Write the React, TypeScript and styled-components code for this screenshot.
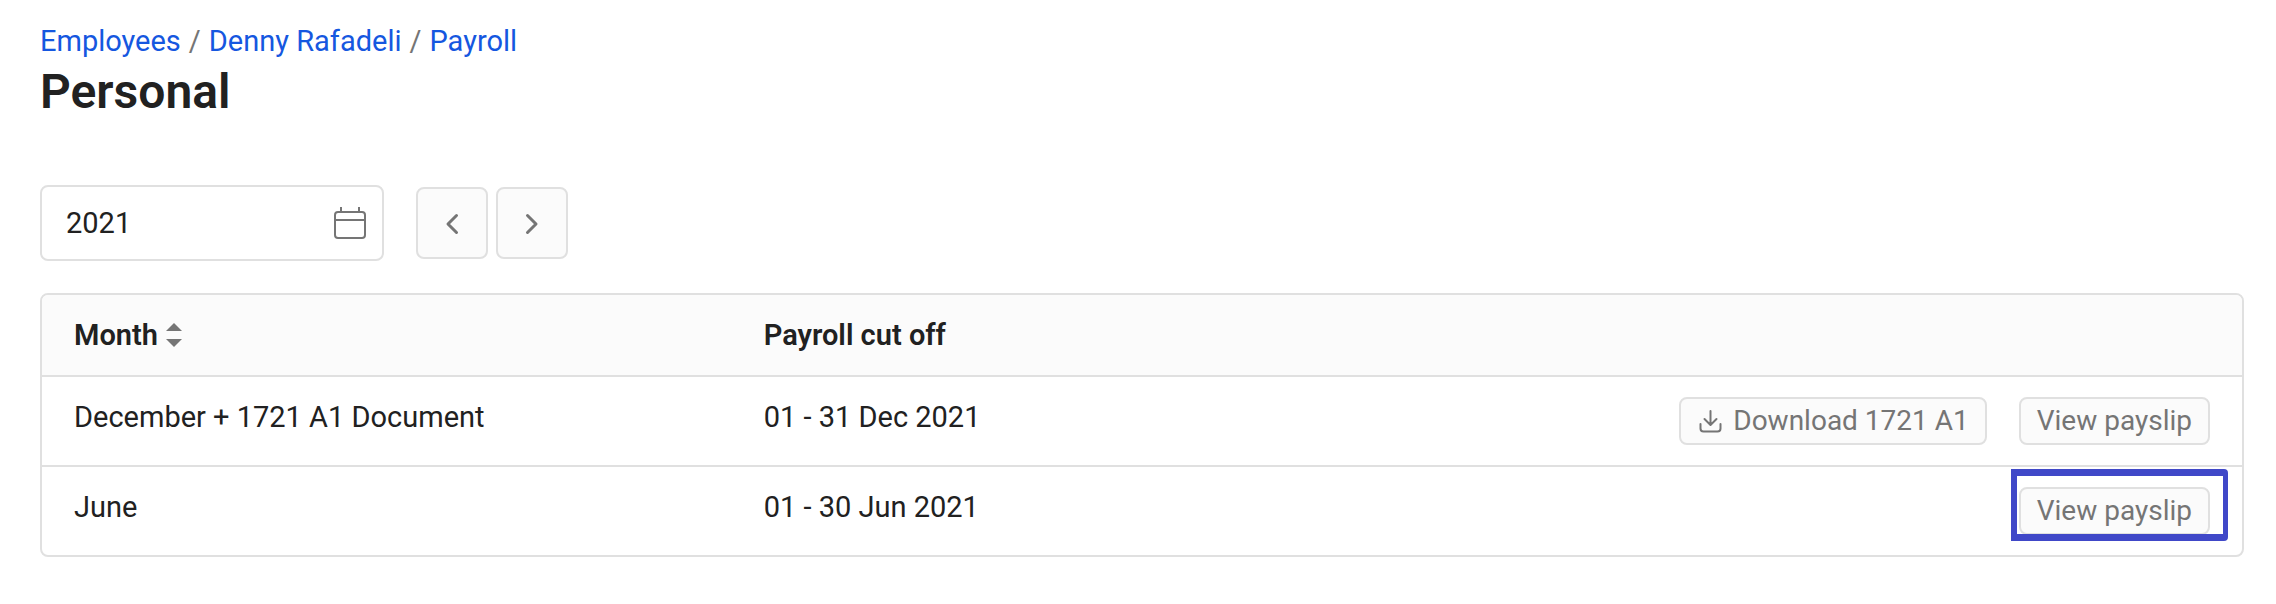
import React from 'react';
import styled, { createGlobalStyle } from 'styled-components';

const color = {
  text: '#212121',
  muted: '#757575',
  link: '#1557e0',
  line: '#e0e0e0',
  surface: '#fbfbfb',
  highlight: '#4048c8',
};

const GlobalStyle = createGlobalStyle`
  *, *::before, *::after { box-sizing: border-box; }
  body {
    margin: 0;
    background: #ffffff;
    color: ${color.text};
    font-family: Roboto, "Liberation Sans", sans-serif;
    font-size: 29px;
    line-height: 40px;
  }
  button, input { font: inherit; }
`;

const Page = styled.main`
  padding: 21px 32px 40px 40px;
`;

const Crumbs = styled.ol`
  display: flex;
  flex-wrap: wrap;
  margin: 0;
  padding: 0;
  list-style: none;
`;

const Crumb = styled.li`
  & + &::before {
    content: '/';
    padding: 0 8px;
    color: ${color.muted};
  }
`;

const CrumbLink = styled.a`
  color: ${color.link};
  text-decoration: none;
`;

const Title = styled.h1`
  margin: 0;
  font-size: 48px;
  line-height: 62px;
  font-weight: 600;
`;

const Toolbar = styled.div`
  display: flex;
  align-items: center;
  gap: 32px;
  margin-top: 62px;
`;

const YearField = styled.label`
  display: flex;
  align-items: center;
  width: 344px;
  height: 76px;
  padding: 0 16px 0 24px;
  border: 2px solid ${color.line};
  border-radius: 8px;
  background: #ffffff;
`;

const YearInput = styled.input`
  flex: 1;
  min-width: 0;
  padding: 0;
  border: 0;
  outline: 0;
  background: transparent;
  color: ${color.text};
`;

const Pager = styled.div`
  display: flex;
  gap: 8px;
`;

const PagerButton = styled.button`
  display: flex;
  align-items: center;
  justify-content: center;
  width: 72px;
  height: 72px;
  padding: 0;
  border: 2px solid ${color.line};
  border-radius: 8px;
  background: ${color.surface};
  color: ${color.muted};
`;

const TableCard = styled.section`
  margin-top: 32px;
  border: 2px solid ${color.line};
  border-radius: 8px;
  overflow: hidden;
`;

const Table = styled.table`
  width: 100%;
  border-collapse: separate;
  border-spacing: 0;
  table-layout: fixed;
`;

const HeadCell = styled.th<{ $width?: string }>`
  width: ${({ $width }) => $width ?? 'auto'};
  padding: 20px 32px;
  background: ${color.surface};
  font-weight: 600;
  text-align: left;
`;

const SortButton = styled.button`
  display: flex;
  align-items: center;
  gap: 8px;
  padding: 0;
  border: 0;
  background: none;
  color: inherit;
`;

const Cell = styled.td`
  height: 90px;
  padding: 20px 32px;
  border-top: 2px solid ${color.line};
  vertical-align: top;
`;

const Actions = styled.div`
  display: flex;
  justify-content: flex-end;
  gap: 32px;
`;

const ActionButton = styled.button`
  display: flex;
  align-items: center;
  gap: 10px;
  height: 48px;
  padding: 0 16px;
  border: 2px solid ${color.line};
  border-radius: 8px;
  background: ${color.surface};
  color: ${color.muted};
  font-size: 28px;
  white-space: nowrap;
`;

const Highlighted = styled.div`
  position: relative;

  &::after {
    content: '';
    position: absolute;
    inset: -18px -18px -6px -8px;
    border: solid ${color.highlight};
    border-width: 7px 5px 7px 6px;
    border-radius: 0 4px 4px 0;
    pointer-events: none;
  }
`;

const CalendarIcon = () => (
  <svg width="32" height="32" viewBox="0 0 32 32" fill="none" stroke={color.muted} strokeWidth="2" aria-hidden="true">
    <rect x="1" y="5" width="30" height="26" rx="3" />
    <path d="M1 13H31M7 0V4M25 0V4" />
  </svg>
);

const Chevron = ({ direction }: { direction: 'left' | 'right' }) => (
  <svg width="24" height="24" viewBox="0 0 24 24" fill="none" stroke="currentColor" strokeWidth="3" strokeLinecap="round" strokeLinejoin="round" aria-hidden="true">
    <path d={direction === 'left' ? 'M16.5 4.5L8 13L16.5 21.5' : 'M7.500 4.5L16 13L7.500 21.5'} />
  </svg>
);

const SortIcon = () => (
  <svg width="16" height="24" viewBox="0 0 16 24" fill={color.muted} aria-hidden="true">
    <path d="M8 0L16 8H0zM0 16H16L8 24z" />
  </svg>
);

const DownloadIcon = () => (
  <svg width="26" height="24" viewBox="0 0 26 24" fill="none" stroke="currentColor" strokeWidth="2" strokeLinecap="round" strokeLinejoin="round" aria-hidden="true">
    <path d="M13.500 2V15.500M7.500 10L13.500 16L19.500 10M3.500 15V19.500Q3.500 22.500 6.500 22.500H20.500Q23.500 22.500 23.500 19.500V15" />
  </svg>
);

const crumbs = ['Employees', 'Denny Rafadeli', 'Payroll'];

const payrolls = [
  { month: 'December + 1721 A1 Document', cutOff: '01 - 31 Dec 2021', taxForm: true, highlighted: false },
  { month: 'June', cutOff: '01 - 30 Jun 2021', taxForm: false, highlighted: true },
];

export default function App() {
  return (
    <>
      <GlobalStyle />
      <Page>
        <header>
          <nav aria-label="Breadcrumb">
            <Crumbs>
              {crumbs.map((name) => (
                <Crumb key={name}>
                  <CrumbLink href="#">{name}</CrumbLink>
                </Crumb>
              ))}
            </Crumbs>
          </nav>
          <Title>Personal</Title>
        </header>

        <Toolbar>
          <YearField>
            <YearInput type="text" aria-label="Year" defaultValue="2021" />
            <CalendarIcon />
          </YearField>
          <Pager>
            <PagerButton type="button" aria-label="Previous year">
              <Chevron direction="left" />
            </PagerButton>
            <PagerButton type="button" aria-label="Next year">
              <Chevron direction="right" />
            </PagerButton>
          </Pager>
        </Toolbar>

        <TableCard>
          <Table>
            <thead>
              <tr>
                <HeadCell scope="col" $width="31.35%">
                  <SortButton type="button">
                    Month
                    <SortIcon />
                  </SortButton>
                </HeadCell>
                <HeadCell scope="col" $width="31.35%">Payroll cut off</HeadCell>
                <HeadCell scope="col" aria-label="Actions" />
              </tr>
            </thead>
            <tbody>
              {payrolls.map((row) => {
                const view = <ActionButton type="button">View payslip</ActionButton>;
                return (
                  <tr key={row.month}>
                    <Cell>{row.month}</Cell>
                    <Cell>{row.cutOff}</Cell>
                    <Cell>
                      <Actions>
                        {row.taxForm && (
                          <ActionButton type="button">
                            <DownloadIcon />
                            Download 1721 A1
                          </ActionButton>
                        )}
                        {row.highlighted ? <Highlighted>{view}</Highlighted> : view}
                      </Actions>
                    </Cell>
                  </tr>
                );
              })}
            </tbody>
          </Table>
        </TableCard>
      </Page>
    </>
  );
}
